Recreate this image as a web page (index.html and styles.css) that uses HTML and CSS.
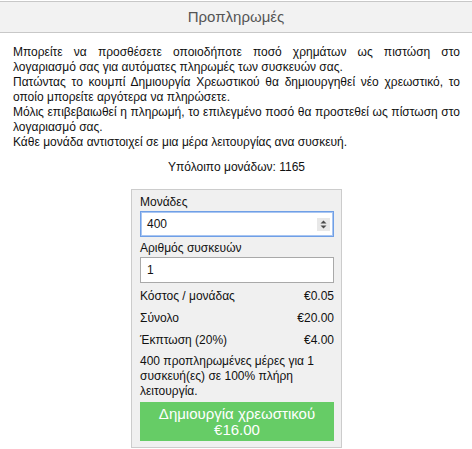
FILE: index.html
```html
<!DOCTYPE html>
<html lang="el">
<head>
<meta charset="utf-8">
<title>Προπληρωμές</title>
<link rel="stylesheet" href="styles.css">
</head>
<body>
<div class="header">Προπληρωμές</div>
<div class="content">
  <p class="intro">Μπορείτε να προσθέσετε οποιοδήποτε ποσό χρημάτων ως πιστώση στο λογαριασμό σας για αυτόματες πληρωμές των συσκευών σας.<br>Πατώντας το κουμπί Δημιουργία Χρεωστικού θα δημιουργηθεί νέο χρεωστικό, το οποίο μπορείτε αργότερα να πληρώσετε.<br>Μόλις επιβεβαιωθεί η πληρωμή, το επιλεγμένο ποσό θα προστεθεί ως πίστωση στο λογαριασμό σας.<br>Κάθε μονάδα αντιστοιχεί σε μια μέρα λειτουργίας ανα συσκευή.</p>
  <div class="balance">Υπόλοιπο μονάδων: 1165</div>
  <div class="card">
    <label class="label">Μονάδες</label>
    <div class="field focused">
      <span class="value">400</span>
      <span class="spin">
        <svg width="13" height="13" viewBox="0 0 13 13"><path d="M3.5 5.5 L6.5 2.5 L9.5 5.5 Z" fill="#4a4a4a"/><path d="M3.5 7.5 L6.5 10.5 L9.5 7.5 Z" fill="#4a4a4a"/></svg>
      </span>
    </div>
    <label class="label second">Αριθμός συσκευών</label>
    <div class="field">
      <span class="value">1</span>
    </div>
    <div class="rows">
      <div class="row"><span>Κόστος / μονάδας</span><span>€0.05</span></div>
      <div class="row"><span>Σύνολο</span><span>€20.00</span></div>
      <div class="row"><span>Έκπτωση (20%)</span><span>€4.00</span></div>
    </div>
    <p class="note">400 προπληρωμένες μέρες για 1 συσκευή(ες) σε 100% πλήρη λειτουργία.</p>
    <button class="btn"><span class="btn-line">Δημιουργία χρεωστικού</span><span class="btn-line">€16.00</span></button>
  </div>
</div>
</body>
</html>
```
FILE: styles.css
```css
html, body {
  margin: 0;
  padding: 0;
  background: #fff;
}
body {
  font-family: "Liberation Sans", Arial, sans-serif;
  color: #111;
  padding-top: 1px;
}
.header {
  background: #f2f2f2;
  border-top: 1px solid #c8c8c8;
  border-bottom: 1px solid #c8c8c8;
  height: 30px;
  line-height: 30px;
  text-align: center;
  font-size: 15px;
  color: #555;
}
.content {
  padding: 12px 12px 0 13px;
}
.intro {
  margin: 0;
  font-size: 12px;
  line-height: 15px;
  text-align: justify;
}
.balance {
  margin-top: 10px;
  text-align: center;
  font-size: 12px;
  line-height: 15px;
}
.card {
  width: 194px;
  margin: 14px auto 0;
  background: #f0f0f0;
  border: 1px solid #ccc;
  padding: 5px 7px 6px 8px;
  display: flex;
  flex-direction: column;
  font-size: 12px;
}
.label {
  line-height: 15px;
  display: block;
}
.label.second {
  margin-top: 4px;
}
.field {
  box-sizing: border-box;
  height: 26px;
  margin-top: 1px;
  border: 1px solid #a9a9a9;
  background: #fff;
  display: flex;
  align-items: center;
  padding: 0 3px 0 6px;
}
.field.focused {
  border: 1px solid #6f9fe6;
  box-shadow: inset 0 0 0 1px #a9c6f2;
}
.value {
  flex: 1;
  font-size: 12px;
}
.spin {
  width: 13px;
  height: 13px;
  background: #e8e8e8;
  display: flex;
}
.rows {
  margin-top: 2px;
}
.row {
  display: flex;
  justify-content: space-between;
  line-height: 22px;
}
.note {
  margin: 3px 0 0;
  line-height: 15px;
}
.btn {
  margin-top: 3px;
  border: none;
  background: #66cc66;
  color: #fff;
  font-family: "Liberation Sans", Arial, sans-serif;
  font-size: 15px;
  padding: 0;
  height: 39px;
  width: 100%;
  display: flex;
  flex-direction: column;
  align-items: center;
  justify-content: center;
}
.btn-line {
  display: block;
  line-height: 16px;
}
```
